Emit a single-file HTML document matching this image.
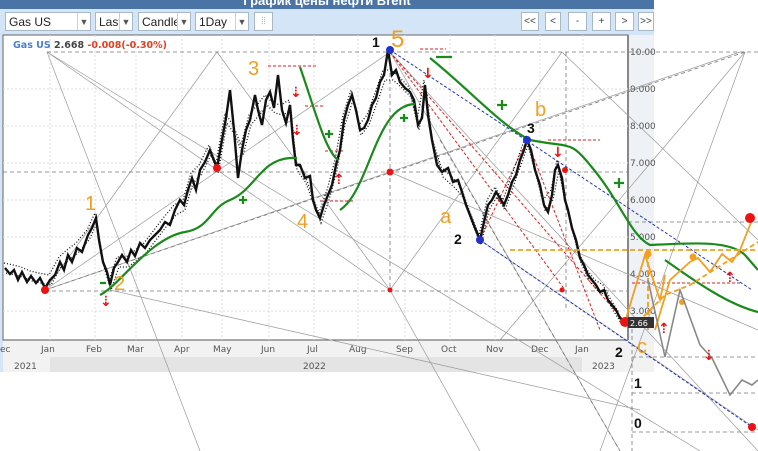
<!DOCTYPE html>
<html><head><meta charset="utf-8"><style>
body{margin:0;width:758px;height:451px;overflow:hidden;background:#fff;font-family:"Liberation Sans","DejaVu Sans",sans-serif;position:relative}
.hdr{position:absolute;left:0;top:0;width:654px;height:9px;background:#4a74a6;color:#fff;font-weight:bold;font-size:13px;line-height:1px;text-align:center;overflow:hidden}
.tb{position:absolute;left:0;top:9px;width:654px;height:26px;background:#d4e5f7}
.dd{position:absolute;top:3px;height:19px;border:1px solid #a9b8c9;background:#fff;font-size:12px;line-height:19px;padding-left:3px;box-sizing:border-box;color:#222;overflow:hidden;white-space:nowrap}
.dd b{position:absolute;right:0;top:0;width:12px;height:17px;border-left:1px solid #c8d0da;font-size:9px;color:#555;text-align:center;font-weight:normal;background:#fff}
.bt{position:absolute;top:3px;height:19px;border:1px solid #a9b8c9;background:#fff;font-size:10px;line-height:17px;text-align:center;color:#444;box-sizing:border-box}
svg{position:absolute;left:0;top:0}
</style></head><body>
<div class="hdr">График цены нефти Brent</div>
<div class="tb">
<div class="dd" style="left:5px;width:86px">Gas US<b>▼</b></div>
<div class="dd" style="left:95px;width:38px">Last<b>▼</b></div>
<div class="dd" style="left:138px;width:53px">Candle<b>▼</b></div>
<div class="dd" style="left:195px;width:54px">1Day<b>▼</b></div>
<div class="bt" style="left:254px;width:19px;color:#aaa">⦙⦙</div>
<div class="bt" style="left:521px;width:18px">&lt;&lt;</div>
<div class="bt" style="left:545px;width:16px">&lt;</div>
<div class="bt" style="left:568px;width:19px">-</div>
<div class="bt" style="left:592px;width:19px">+</div>
<div class="bt" style="left:615px;width:19px">&gt;</div>
<div class="bt" style="left:638px;width:16px">&gt;&gt;</div>
</div>
<svg width="758" height="451" viewBox="0 0 758 451" font-family="DejaVu Sans, Liberation Sans, sans-serif">
<rect x="0" y="35" width="654" height="337" fill="#d4e5f7"/>
<rect x="3" y="35" width="625" height="305" fill="#fff" stroke="#666" stroke-width="1"/>
<rect x="628" y="35" width="26" height="305" fill="#eef1f5"/>
<rect x="3" y="340" width="651" height="32" fill="#f2f2f2"/>
<rect x="50" y="357" width="532" height="15" fill="#e4e4e4"/>
<line x1="3" y1="340" x2="628" y2="340" stroke="#555"/>
<line x1="628" y1="35" x2="628" y2="340" stroke="#888" stroke-width="2"/>
<g stroke="#ddd" stroke-dasharray="2,2">
<path d="M50 35V340M95 35V340M136 35V340M182 35V340M222 35V340M269 35V340M314 35V340M358 35V340M405 35V340M450 35V340M495 35V340M540 35V340M583 35V340"/>
<path d="M3 89H628M3 126H628M3 163H628M3 200H628M3 237H628M3 274H628M3 311H628"/>
</g>
<g font-size="9" fill="#555">
<text x="0" y="352">ec</text><text x="41" y="352">Jan</text><text x="86" y="352">Feb</text><text x="127" y="352">Mar</text><text x="174" y="352">Apr</text><text x="213" y="352">May</text><text x="261" y="352">Jun</text><text x="307" y="352">Jul</text><text x="349" y="352">Aug</text><text x="396" y="352">Sep</text><text x="441" y="352">Oct</text><text x="486" y="352">Nov</text><text x="531" y="352">Dec</text><text x="575" y="352">Jan</text>
<text x="14" y="369">2021</text><text x="303" y="369">2022</text><text x="592" y="369">2023</text>
<text x="630" y="55">10.00</text><text x="630" y="92">9.000</text><text x="630" y="129">8.000</text><text x="630" y="166">7.000</text><text x="630" y="203">6.000</text><text x="630" y="240">5.000</text><text x="630" y="277">4.000</text><text x="630" y="314">3.000</text>
</g>
<text x="13" y="48" font-size="9.5" font-weight="bold"><tspan fill="#4a7ed0">Gas US</tspan><tspan fill="#444"> 2.668 </tspan><tspan fill="#e04020">-0.008(-0.30%)</tspan></text>
<g stroke="#999" stroke-width="0.7" fill="none">
<path d="M47 52L200 451M47 52L390 290M47 52L700 451M390 52L758 451M390 52L620 451M45 290L390 52M45 290L740 52M217 52L45 290M217 52L390 290M562 52L390 290M562 52L758 240M745 52L600 451M745 52L500 340M480 240L758 430M110 290L640 410M390 172L758 330M390 290L480 451"/>
</g>
<g stroke="#777" stroke-width="0.8" fill="none" stroke-dasharray="4,3">
<path d="M47 52H758M45 291H628M628 222H758M632 357H758M632 393H758M632 432H758M632 322V451M390 52V290M566 52V310M3 172H628M45 290L745 52M440 140L620 451"/>
</g>
<g stroke="#d22" stroke-width="1" fill="none" stroke-dasharray="3,2">
<path d="M390 52L625 322M390 52L565 290M527 140L480 240M527 140L600 330M268 66H318M305 106H325M325 151H345M320 201H355M420 49H446M548 140H600M632 283H740"/>
</g>
<g stroke="#2233bb" stroke-width="1" fill="none" stroke-dasharray="3,2">
<path d="M390 50L752 290M480 240L752 427"/>
</g>
<g fill="none" stroke="#111">
<polyline stroke-width="2.4" points="5,268 10,274 14,270 18,280 22,272 27,282 31,276 36,283 40,278 45,288 50,280 55,275 60,262 64,270 68,255 72,262 77,248 82,252 88,235 92,228 96,218 99,240 103,262 107,272 110,285 114,268 118,262 122,255 127,262 131,250 135,256 140,243 145,248 150,240 155,235 160,230 165,222 170,225 175,210 180,200 184,205 188,190 192,178 196,190 200,170 205,162 210,150 213,158 217,168 222,140 226,118 230,90 234,130 238,178 242,150 246,130 250,120 255,95 258,110 262,125 266,100 270,92 274,108 278,75 282,110 286,123 290,105 293,140 296,165 300,165 305,178 310,176 313,200 316,210 320,218 324,205 328,195 332,185 336,165 340,150 344,120 348,105 352,95 356,110 360,130 364,128 368,120 372,105 376,98 380,82 384,75 388,50 392,75 396,70 400,82 405,88 410,92 414,100 418,125 422,118 425,85 428,115 432,140 437,165 442,172 448,168 453,182 458,180 462,192 466,205 470,215 475,228 480,240 484,222 488,205 492,200 496,192 500,198 504,205 508,195 512,182 516,175 520,160 524,150 527,140 531,150 535,170 540,185 544,205 548,212 552,195 555,170 558,165 562,178 565,200 568,210 572,228 576,240 580,258 584,265 588,275 592,280 596,285 600,292 604,290 608,300 612,305 616,310 620,318 625,322"/>
<polyline stroke-width="1.3" stroke-dasharray="1,2" transform="translate(1,5)" points="5,268 14,270 22,272 31,276 40,278 50,280 60,262 68,255 77,248 88,235 96,218 103,262 110,285 118,262 127,262 135,256 145,248 155,235 165,222 175,210 184,205 192,178 200,170 210,150 217,168 226,118 234,130 242,150 250,120 258,110 266,100 274,108 282,110 290,105 296,165 305,178 313,200 320,218 328,195 336,165 344,120 352,95 360,130 368,120 376,98 384,75 392,75 400,82 410,92 418,125 425,85 432,140 442,172 453,182 462,192 470,215 480,240 488,205 496,192 504,205 512,182 520,160 527,140 535,170 544,205 552,195 558,165 565,200 572,228 580,258 588,275 596,285 604,290 612,305 620,318"/>
<polyline stroke-width="1.3" stroke-dasharray="1,2" transform="translate(-1,-5)" points="5,268 14,270 22,272 31,276 40,278 50,280 60,262 68,255 77,248 88,235 96,218 103,262 110,285 118,262 127,262 135,256 145,248 155,235 165,222 175,210 184,205 192,178 200,170 210,150 217,168 226,118 234,130 242,150 250,120 258,110 266,100 274,108 282,110 290,105 296,165 305,178 313,200 320,218 328,195 336,165 344,120 352,95 360,130 368,120 376,98 384,75 392,75 400,82 410,92 418,125 425,85 432,140 442,172 453,182 462,192 470,215 480,240 488,205 496,192 504,205 512,182 520,160 527,140 535,170 544,205 552,195 558,165 565,200 572,228 580,258 588,275 596,285 604,290 612,305 620,318"/>
</g>
<g stroke="#1a8a1a" stroke-width="2.2" fill="none">
<path d="M100 295C120 285 150 238 185 232C210 228 210 208 230 200C255 190 260 160 290 158L297 158"/>
<path d="M300 67C315 110 325 150 338 160"/>
<path d="M340 210C370 190 375 105 415 104"/>
<path d="M430 58C470 90 500 125 530 140C570 148 570 140 590 165C620 200 630 235 650 245C690 243 730 240 745 255L758 270"/>
<path d="M665 260C700 285 730 305 758 312"/>
<path d="M239 200h8M243 196v8M325 134h8M329 130v8M400 118h8M404 114v8M497 105h10M502 100v10M614 183h10M619 178v10M100 283h6M436 57h16"/>
</g>
<g stroke="#f0a020" stroke-width="1.8" fill="none">
<path d="M625 322L645 255L660 300L665 275M655 330L670 280L690 262L698 258L710 272L722 254L732 262L740 250L752 220"/>
<path d="M510 250H758M638 322L665 295L690 285L758 242M648 254V330" stroke-dasharray="5,3"/>
</g>
<g fill="#f0a020"><circle cx="648" cy="254" r="3.5"/><circle cx="693" cy="257" r="3.5"/><circle cx="682" cy="302" r="3"/></g>
<polyline fill="none" stroke="#888" stroke-width="1.6" points="648,280 665,357 680,290 700,345 712,358 730,395 742,380 752,385 758,380"/>
<g fill="#e11"><circle cx="45" cy="290" r="4"/><circle cx="217" cy="168" r="4"/><circle cx="390" cy="172" r="3.5"/><circle cx="390" cy="290" r="2.5"/><circle cx="562" cy="290" r="2.5"/><circle cx="625" cy="322" r="5"/><circle cx="750" cy="218" r="5"/><circle cx="752" cy="427" r="4"/><circle cx="565" cy="170" r="3"/></g>
<g fill="#2233cc"><circle cx="390" cy="50" r="4"/><circle cx="480" cy="240" r="4"/><circle cx="527" cy="140" r="4"/></g>
<g fill="#e11" font-size="14" font-weight="bold">
<text x="100" y="306">⇣</text><text x="290" y="97">⇣</text><text x="291" y="135">⇣</text><text x="333" y="184">⇡</text><text x="422" y="78">↓</text><text x="552" y="157">↓</text><text x="658" y="333">⇡</text><text x="703" y="360">⇣</text><text x="724" y="282">⇡</text>
</g>
<g fill="#f0a020" font-size="20" font-family="Liberation Sans, sans-serif">
<text x="85" y="210">1</text><text x="114" y="290">2</text><text x="248" y="75">3</text><text x="297" y="228">4</text><text x="391" y="47" font-size="24">5</text><text x="440" y="223">a</text><text x="535" y="116">b</text><text x="637" y="353">c</text>
</g>
<g fill="#111" font-size="14" font-weight="bold" font-family="Liberation Sans, sans-serif">
<text x="372" y="47">1</text><text x="527" y="133">3</text><text x="454" y="244">2</text><text x="615" y="357">2</text><text x="634" y="388">1</text><text x="634" y="428">0</text>
</g>
<rect x="628" y="317" width="26" height="11" fill="#333"/><text x="630" y="326" font-size="8" fill="#fff">2.66</text>
</svg>
</body></html>
